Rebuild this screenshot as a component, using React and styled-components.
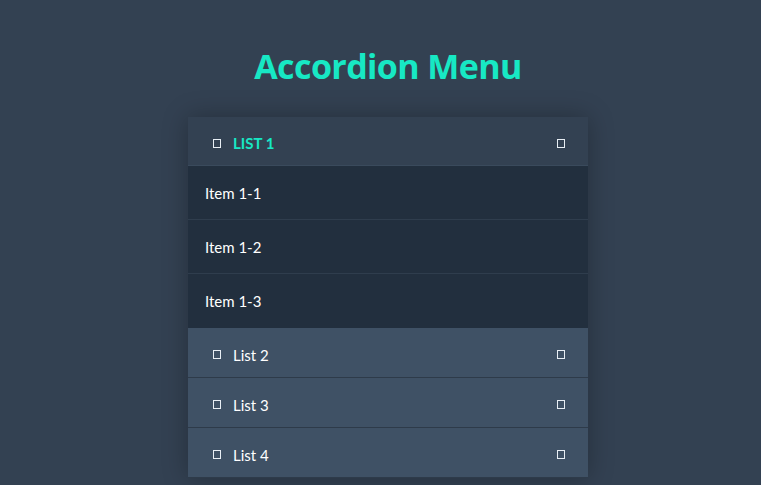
import styled, { createGlobalStyle } from "styled-components";
import { useState } from "react";

const Global = createGlobalStyle`
  html, body {
    margin: 0;
    padding: 0;
    background: #334152;
    min-height: 100%;
  }
  body {
    font-family: Lato, "Open Sans", sans-serif;
  }
`;

const Page = styled.div`
  display: flex;
  flex-direction: column;
  align-items: center;
  padding: 44px 0 0 15px;
  min-height: 485px;
  box-sizing: border-box;
`;

const Title = styled.h1`
  margin: 0 0 29px;
  font-family: "Open Sans", "Noto Sans", sans-serif;
  font-weight: 700;
  font-size: 34px;
  line-height: 44px;
  color: #17e8c4;
  letter-spacing: -0.6px;
`;

const Card = styled.ul`
  list-style: none;
  margin: 0;
  padding: 0;
  width: 400px;
  box-shadow: 0 0 24px rgba(0, 0, 0, 0.28);
`;

const Head = styled.div`
  display: flex;
  align-items: center;
  box-sizing: border-box;
  height: ${({ open }) => (open ? 49 : 50)}px;
  padding: 4px 23px 0 25px;
  background: ${({ open }) => (open ? "#334152" : "#3f5165")};
  border-bottom: 1px solid ${({ open }) => (open ? "#3a4a5c" : "#2e3b4a")};
  color: ${({ open }) => (open ? "#17e8c4" : "#ffffff")};
  font-size: 15px;
  font-weight: ${({ open }) => (open ? 700 : 400)};
  text-transform: ${({ open }) => (open ? "uppercase" : "none")};
  cursor: pointer;
`;

const Box = styled.span`
  display: inline-block;
  width: 6px;
  height: 7px;
  border: 1px solid #e8eef4;
  flex: none;
`;

const Label = styled.span`
  flex: 1;
  margin-left: 12px;
`;

const Item = styled.li`
  display: flex;
  align-items: center;
  height: 53px;
  padding-left: 17px;
  background: #222f3e;
  border-bottom: 1px solid #2f3d4d;
  color: #ffffff;
  font-size: 15px;
  &:last-child {
    border-bottom: none;
    height: 54px;
  }
`;

const Sub = styled.ul`
  list-style: none;
  margin: 0;
  padding: 0;
`;

const lists = [
  { name: "List 1", items: ["Item 1-1", "Item 1-2", "Item 1-3"] },
  { name: "List 2", items: ["Item 2-1", "Item 2-2"] },
  { name: "List 3", items: ["Item 3-1", "Item 3-2"] },
  { name: "List 4", items: ["Item 4-1", "Item 4-2"] },
];

const App = () => {
  const [open, setOpen] = useState(0);

  return (
    <Page>
      <Global />
      <Title>Accordion Menu</Title>
      <Card>
        {lists.map((list, i) => (
          <li key={list.name}>
            <Head open={open === i} onClick={() => setOpen(open === i ? -1 : i)}>
              <Box />
              <Label>{list.name}</Label>
              <Box />
            </Head>
            {open === i && (
              <Sub>
                {list.items.map((item) => (
                  <Item key={item}>{item}</Item>
                ))}
              </Sub>
            )}
          </li>
        ))}
      </Card>
    </Page>
  );
};

export default App;
